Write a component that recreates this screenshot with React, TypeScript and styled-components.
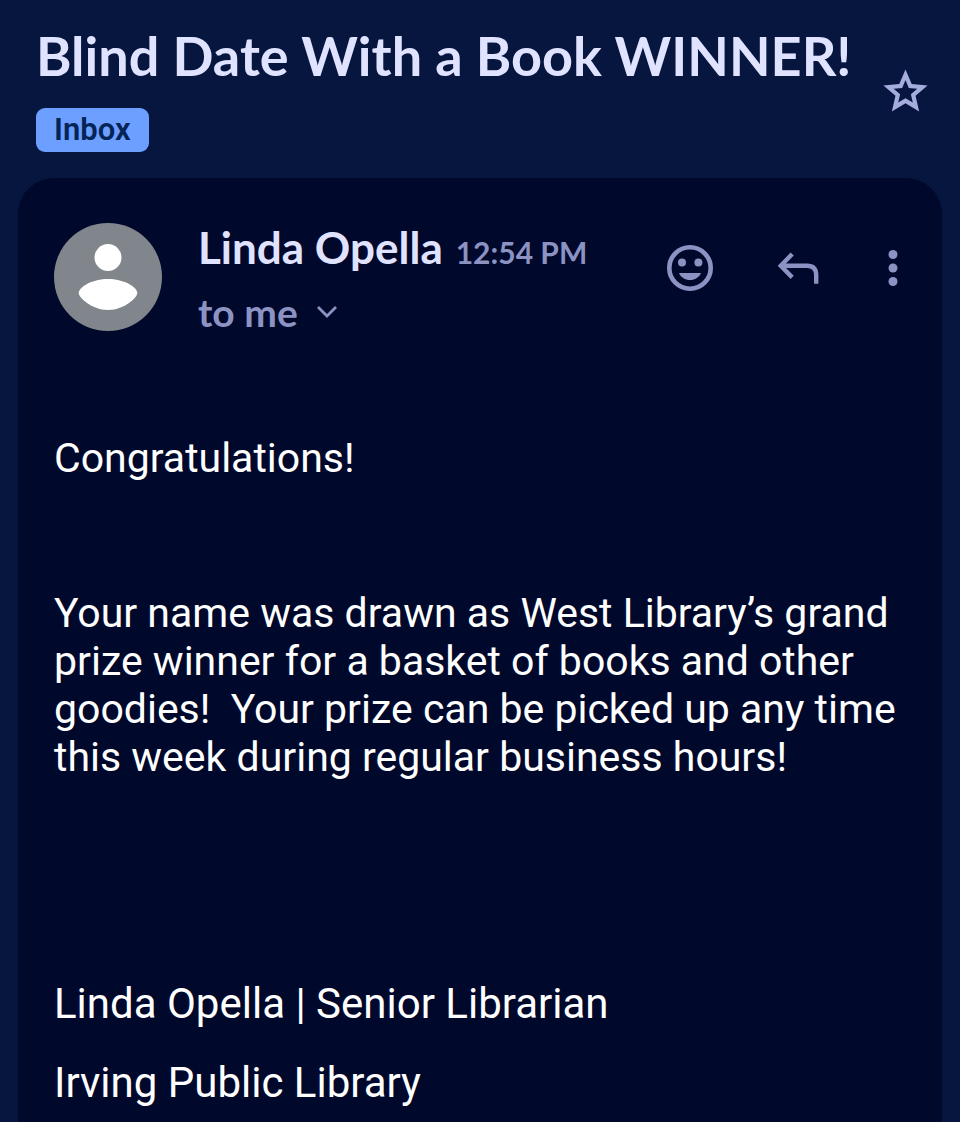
import React from "react";
import styled, { createGlobalStyle } from "styled-components";

const display = `Lato, "Liberation Sans", sans-serif`;
const colors = {
  page: "#07163f",
  card: "#00082b",
  heading: "#e0e3ff",
  muted: "#8c93c2",
  star: "#a5addd",
  badge: "#6c9fff",
  badgeText: "#042457",
};

const GlobalStyle = createGlobalStyle`
  *, *::before, *::after { box-sizing: border-box; }
  body {
    margin: 0;
    background: ${colors.page};
    font-family: Roboto, "Liberation Sans", sans-serif;
  }
  h1, h2, p { margin: 0; }
`;

const Page = styled.div`
  display: flex;
  flex-direction: column;
  min-height: 100vh;
  padding: 30px 18px 0;
`;

const SubjectBar = styled.header`
  display: flex;
  justify-content: space-between;
  align-items: center;
  padding: 0 10px 0 18px;
  margin-bottom: 26px;
`;

const SubjectText = styled.div`
  display: flex;
  flex-direction: column;
  align-items: flex-start;
  gap: 26px;
`;

const Subject = styled.h1`
  font: 700 54px/52px ${display};
  color: ${colors.heading};
`;

const IconButton = styled.button<{ $color?: string }>`
  display: flex;
  flex: none;
  padding: 0;
  border: 0;
  background: none;
  color: ${(p) => p.$color ?? colors.muted};
  cursor: pointer;
`;

const LabelButton = styled.button`
  height: 44px;
  padding: 0 18px;
  border: 0;
  border-radius: 9px;
  background: ${colors.badge};
  color: ${colors.badgeText};
  font: 600 31px/44px Roboto, "Liberation Sans", sans-serif;
`;

const Card = styled.main`
  flex: 1;
  padding: 44px 36px 12px;
  border-radius: 36px 36px 0 0;
  background: ${colors.card};
`;

const MessageHeader = styled.div`
  display: flex;
  align-items: flex-start;
  padding-top: 1px;
`;

const Sender = styled.div`
  flex: 1;
  margin-left: 36px;
`;

const NameLine = styled.div`
  display: flex;
  align-items: baseline;
  gap: 13px;
  white-space: nowrap;
`;

const SenderName = styled.h2`
  font: 700 44px/48px ${display};
  color: ${colors.heading};
`;

const Time = styled.time`
  font: 700 30px/48px ${display};
  color: ${colors.muted};
`;

const RecipientButton = styled.button`
  display: flex;
  align-items: center;
  gap: 17px;
  margin-top: 10px;
  padding: 0;
  border: 0;
  background: none;
  color: ${colors.muted};
  font: 700 39px/52px ${display};
`;

const Actions = styled.div`
  display: flex;
  align-items: center;
  gap: 60px;
  height: 90px;
`;

const Body = styled.article`
  padding-top: 96px;
  color: #fff;
  font-size: 41px;
  line-height: 48px;
`;

const Paragraph = styled.p`
  white-space: pre-wrap;
  margin-bottom: 107px;
`;

const Signature = styled.footer`
  display: flex;
  flex-direction: column;
  gap: 31px;
  margin-top: 199px;
  font-size: 42px;
`;

const StarIcon = () => (
  <svg width="53" height="53" viewBox="0 0 24 24" fill="currentColor" aria-hidden="true">
    <path d="M22 9.24l-7.19-.62L12 2 9.19 8.63 2 9.24l5.46 4.73L5.82 21 12 17.27 18.18 21l-1.63-7.03L22 9.24zM12 15.03L8.69 17.03 9.57 13.26 6.65 10.72 10.5 10.39 12 6.84 13.5 10.39 17.35 10.72 14.43 13.26 15.31 17.03z" />
  </svg>
);

const AvatarIcon = () => (
  <svg width="108" height="108" viewBox="0 0 108 108" role="img" aria-label="Linda Opella">
    <circle cx="54" cy="54" r="54" fill="#80868b" />
    <circle cx="54" cy="34.5" r="13.5" fill="#fff" />
    <path
      d="M54 56C69 56 83.3 63.5 83.3 70.3C83.3 74 71 87 54 87C37 87 24.7 74 24.7 70.3C24.7 63.5 39 56 54 56Z"
      fill="#fff"
    />
  </svg>
);

const ChevronIcon = () => (
  <svg width="24" height="20" viewBox="0 0 24 20" fill="none" stroke="currentColor" strokeWidth="2.8" aria-hidden="true">
    <path d="M3 5l9 9 9-9" />
  </svg>
);

const SmileIcon = () => (
  <svg width="48" height="48" viewBox="0 0 48 48" fill="currentColor" aria-hidden="true">
    <circle cx="24" cy="24" r="20.7" fill="none" stroke="currentColor" strokeWidth="4.6" />
    <circle cx="16" cy="18.4" r="4" />
    <circle cx="32.4" cy="18.4" r="4" />
    <path d="M13 29H35C33.3 33.3 29 36 24 36C19 36 14.7 33.3 13 29Z" />
  </svg>
);

const ReplyIcon = () => (
  <svg width="48" height="48" viewBox="0 0 48 48" fill="none" stroke="currentColor" strokeWidth="4.4" aria-hidden="true">
    <path d="M18.2 10L6.8 21.7L18.2 33.4" />
    <path d="M6.8 21.7H33Q42.2 21.7 42.2 31V39.7" />
  </svg>
);

const MoreIcon = () => (
  <svg width="24" height="48" viewBox="0 0 24 48" fill="currentColor" aria-hidden="true">
    <circle cx="11" cy="10.5" r="4.5" />
    <circle cx="11" cy="24" r="4.5" />
    <circle cx="11" cy="37.5" r="4.5" />
  </svg>
);

export default function App() {
  return (
    <>
      <GlobalStyle />
      <Page>
        <SubjectBar>
          <SubjectText>
            <Subject>Blind Date With a Book WINNER!</Subject>
            <LabelButton>Inbox</LabelButton>
          </SubjectText>
          <IconButton $color={colors.star} aria-label="Star">
            <StarIcon />
          </IconButton>
        </SubjectBar>
        <Card>
          <MessageHeader>
            <AvatarIcon />
            <Sender>
              <NameLine>
                <SenderName>Linda Opella</SenderName>
                <Time>12:54 PM</Time>
              </NameLine>
              <RecipientButton>
                to me
                <ChevronIcon />
              </RecipientButton>
            </Sender>
            <Actions>
              <IconButton aria-label="Add reaction">
                <SmileIcon />
              </IconButton>
              <IconButton aria-label="Reply">
                <ReplyIcon />
              </IconButton>
              <IconButton aria-label="More options">
                <MoreIcon />
              </IconButton>
            </Actions>
          </MessageHeader>
          <Body>
            <Paragraph>Congratulations!</Paragraph>
            <Paragraph>
              {"Your name was drawn as West Library’s grand prize winner for a basket of books and other goodies!  Your prize can be picked up any time this week during regular business hours!"}
            </Paragraph>
            <Signature>
              <p>Linda Opella | Senior Librarian</p>
              <p>Irving Public Library</p>
            </Signature>
          </Body>
        </Card>
      </Page>
    </>
  );
}
